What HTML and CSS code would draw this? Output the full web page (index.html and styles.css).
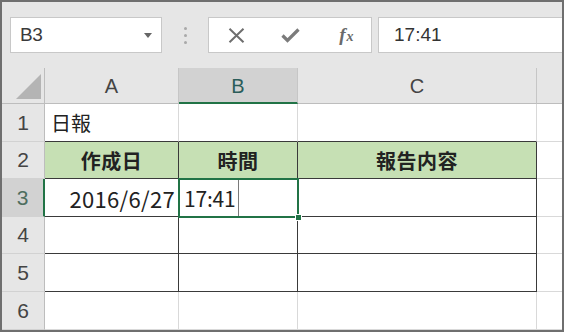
FILE: index.html
```html
<!DOCTYPE html>
<html lang="ja">
<head>
<meta charset="utf-8">
<title>日報</title>
<link rel="stylesheet" href="styles.css">
</head>
<body>
<div class="frame">
  <div class="toolbar">
    <div class="namebox">
      <span class="name">B3</span>
      <span class="caret"></span>
    </div>
    <div class="dots"><i></i><i></i><i></i></div>
    <div class="fbuttons">
      <span class="fbtn">
        <svg width="17" height="15" viewBox="0 0 17 15"><path d="M1.5 0.8 L15.5 14.2 M15.5 0.8 L1.5 14.2" stroke="#6e6e6e" stroke-width="2" fill="none"/></svg>
      </span>
      <span class="fbtn">
        <svg width="19" height="15" viewBox="0 0 19 15"><path d="M1.5 7.5 L6.5 12.5 L17.5 1.5" stroke="#7b7b7b" stroke-width="3.2" fill="none"/></svg>
      </span>
      <span class="fbtn fx">f<span class="fx-x">x</span></span>
    </div>
    <div class="finput">17:41</div>
  </div>
  <div class="sheet">
    <div class="corner"><span class="tri"></span></div>
    <div class="colhead">A</div>
    <div class="colhead sel-col">B</div>
    <div class="colhead">C</div>
    <div class="colhead last"></div>

    <div class="rowhead">1</div>
    <div class="cell t-top">日報</div>
    <div class="cell t-top"></div>
    <div class="cell t-top"></div>
    <div class="cell last"></div>

    <div class="rowhead">2</div>
    <div class="cell hdr">作成日</div>
    <div class="cell hdr">時間</div>
    <div class="cell hdr">報告内容</div>
    <div class="cell last"></div>

    <div class="rowhead sel-row">3</div>
    <div class="cell tb num">2016/6/27</div>
    <div class="cell tb active"><span class="edit">17:41</span><span class="selbox"></span><span class="handle"></span></div>
    <div class="cell tb"></div>
    <div class="cell last"></div>

    <div class="rowhead">4</div>
    <div class="cell tb"></div>
    <div class="cell tb"></div>
    <div class="cell tb"></div>
    <div class="cell last"></div>

    <div class="rowhead">5</div>
    <div class="cell tb"></div>
    <div class="cell tb"></div>
    <div class="cell tb"></div>
    <div class="cell last"></div>

    <div class="rowhead">6</div>
    <div class="cell"></div>
    <div class="cell"></div>
    <div class="cell"></div>
    <div class="cell last"></div>
  </div>
</div>
</body>
</html>
```

FILE: styles.css
```css
* { box-sizing: border-box; }
html, body { margin: 0; padding: 0; }
body {
  width: 564px;
  height: 332px;
  overflow: hidden;
  background: #e6e6e6;
  font-family: "Noto Sans CJK JP", "Liberation Sans", sans-serif;
}
.frame {
  width: 564px;
  height: 332px;
  border: 2px solid #6f6f6f;
  background: #e6e6e6;
  overflow: hidden;
  display: flex;
  flex-direction: column;
}
.toolbar {
  height: 66px;
  flex: none;
  display: flex;
  align-items: center;
  padding-left: 8px;
}
.namebox {
  width: 152px;
  height: 36px;
  background: #fff;
  border: 1px solid #c8c8c8;
  display: flex;
  align-items: center;
  justify-content: space-between;
  padding: 0 9px 0 9px;
}
.name {
  font-family: "Liberation Sans", sans-serif;
  font-size: 19px;
  color: #3a3a3a;
  letter-spacing: -0.3px;
}
.caret {
  width: 0;
  height: 0;
  border-left: 4.5px solid transparent;
  border-right: 4.5px solid transparent;
  border-top: 5px solid #666;
  margin-top: 1px;
}
.dots {
  width: 46px;
  height: 36px;
  display: flex;
  flex-direction: column;
  align-items: center;
  justify-content: center;
  gap: 4px;
}
.dots i {
  display: block;
  width: 3px;
  height: 3px;
  border-radius: 50%;
  background: #a9a9a9;
}
.fbuttons {
  width: 164px;
  height: 36px;
  background: #fff;
  border: 1px solid #c8c8c8;
  display: flex;
  align-items: center;
}
.fbtn {
  width: 54px;
  display: flex;
  align-items: center;
  justify-content: center;
}
.fbtn:first-child { width: 56px; }
.fx {
  font-family: "Liberation Serif", serif;
  font-style: italic;
  font-weight: bold;
  font-size: 19px;
  color: #6a6a6a;
  padding-left: 4px;
  align-items: baseline;
}
.fx-x {
  font-size: 14px;
  margin-left: 1px;
}
.finput {
  flex: 1;
  margin-left: 6px;
  height: 36px;
  background: #fff;
  border: 1px solid #c8c8c8;
  border-right: none;
  display: flex;
  align-items: center;
  padding-left: 15px;
  font-family: "Liberation Sans", sans-serif;
  font-size: 19px;
  color: #333;
}
.sheet {
  flex: 1;
  display: grid;
  grid-template-columns: 43px 134px 119px 239px 1fr;
  grid-template-rows: 36px 38px 37px 38px 37px 38px 38px;
  background: #fff;
}
.corner {
  background: #e6e6e6;
  border-right: 1px solid #bdbdbd;
  border-bottom: 1px solid #bdbdbd;
  display: flex;
  align-items: flex-end;
  justify-content: flex-end;
  padding: 0 3px 4px 0;
}
.tri {
  width: 0;
  height: 0;
  border-left: 25px solid transparent;
  border-bottom: 25px solid #b4b4b4;
}
.colhead {
  background: #e6e6e6;
  border-right: 1px solid #c6c6c6;
  border-bottom: 1px solid #bdbdbd;
  display: flex;
  align-items: center;
  justify-content: center;
  font-family: "Liberation Sans", sans-serif;
  font-size: 20px;
  color: #444;
  padding-top: 1px;
}
.colhead.sel-col {
  background: #d2d2d2;
  border-bottom: 2px solid #217346;
  color: #2b5d5a;
  padding-top: 2px;
}
.colhead.last { border-right: none; }
.rowhead {
  background: #e6e6e6;
  border-right: 1px solid #bdbdbd;
  border-bottom: 1px solid #d2d2d2;
  display: flex;
  align-items: center;
  justify-content: center;
  font-family: "Liberation Sans", sans-serif;
  font-size: 21px;
  color: #444;
}
.rowhead.sel-row {
  background: #d2d2d2;
  border-right: 2px solid #217346;
  color: #4e6e5e;
}
.cell {
  border-right: 1px solid #d9d9d9;
  border-bottom: 1px solid #d9d9d9;
  display: flex;
  align-items: center;
  padding: 0 6px;
  font-size: 20px;
  color: #222;
  min-width: 0;
}
.cell.last { border-right: none; }
.cell.t-top { border-bottom-color: #3a3a3a; }
.cell.hdr {
  background: #c6e0b4;
  font-weight: bold;
  justify-content: center;
  border-right: 1px solid #3a3a3a;
  border-bottom: 1px solid #3a3a3a;
  letter-spacing: 0.5px;
}
.cell.tb {
  border-right: 1px solid #3a3a3a;
  border-bottom: 1px solid #3a3a3a;
}
.cell.num {
  justify-content: flex-end;
  padding-right: 3px;
  font-family: "Noto Sans CJK JP", sans-serif;
  font-size: 22px;
  letter-spacing: 0.3px;
  white-space: nowrap;
}
.cell.active {
  position: relative;
  padding: 0 0 0 5px;
  align-items: stretch;
}
.edit {
  display: flex;
  align-items: center;
  padding-right: 3px;
  border-right: 1px solid #7a7a7a;
  font-size: 21px;
  letter-spacing: -0.2px;
}
.selbox {
  position: absolute;
  left: -1px;
  top: -1px;
  right: -2px;
  bottom: -2px;
  border: 2px solid #217346;
  pointer-events: none;
}
.handle {
  position: absolute;
  right: -5px;
  bottom: -5px;
  width: 7px;
  height: 7px;
  background: #217346;
  border: 1px solid #fff;
}
```
